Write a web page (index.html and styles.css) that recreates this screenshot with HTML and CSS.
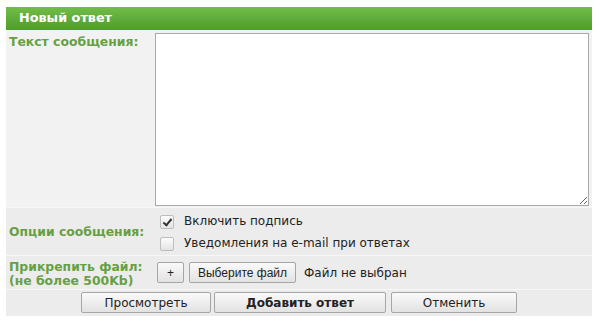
FILE: index.html
```html
<!DOCTYPE html>
<html lang="ru">
<head>
    <meta charset="UTF-8">
    <title>Новый ответ</title>
    <link rel="stylesheet" href="styles.css">
</head>
<body>
    <div class="reply-box">
        <div class="reply-head">Новый ответ</div>

        <div class="row row-text">
            <div class="label">Текст сообщения:</div>
            <div class="field">
                <textarea class="message"></textarea>
            </div>
        </div>

        <div class="row row-options">
            <div class="label">Опции сообщения:</div>
            <div class="field options">
                <label class="option"><span class="check checked"></span>Включить подпись</label>
                <label class="option"><span class="check"></span>Уведомления на e-mail при ответах</label>
            </div>
        </div>

        <div class="row row-file">
            <div class="label">Прикрепить файл:<br>(не более 500Kb)</div>
            <div class="field file">
                <button class="btn small">+</button>
                <button class="btn pick">Выберите файл</button>
                <span class="file-name">Файл не выбран</span>
            </div>
        </div>

        <div class="actions">
            <button class="btn wide">Просмотреть</button>
            <button class="btn wide main">Добавить ответ</button>
            <button class="btn wide">Отменить</button>
        </div>
    </div>
</body>
</html>
```

FILE: styles.css
```css
body {
    margin: 0;
    padding: 7px 8px 0 6px;
    background-color: #fff;
    font-family: "DejaVu Sans", Verdana, sans-serif;
}
.reply-box {
    width: 586px;
    background-color: #ececec;
}
.reply-head {
    height: 23px;
    line-height: 22px;
    padding-left: 13px;
    color: #fff;
    font-size: 12.8px;
    font-weight: bold;
    background: linear-gradient(#72bd48, #4f9c2c);
}
.row {
    display: grid;
    grid-template-columns: 144px 1fr;
    border-bottom: 1px solid #f7f7f7;
}
.label {
    padding: 5px 3px;
    color: #66a043;
    font-size: 12.4px;
    font-weight: bold;
    line-height: 14px;
}
.row-text {
    background-color: #f2f2f2;
}
.row-text .field {
    padding: 3px 3px 1px 5px;
}
.message {
    display: block;
    box-sizing: border-box;
    width: 434px;
    height: 173px;
    margin: 0;
    border: 1px solid #a9a9a9;
    background-color: #fff;
    resize: both;
}
.row-options .label {
    align-self: center;
}
.options {
    display: flex;
    flex-direction: column;
    gap: 7px;
    padding: 6px 0 4px 10px;
}
.option {
    display: flex;
    align-items: center;
    gap: 10px;
    font-size: 12px;
    color: #222;
    line-height: 15px;
}
.check {
    width: 12px;
    height: 12px;
    border: 1px solid #bdbdbd;
    border-radius: 2px;
    background: linear-gradient(#fcfcfc, #e4e4e4);
    position: relative;
}
.check.checked::after {
    content: "";
    position: absolute;
    left: 4px;
    top: 1px;
    width: 3px;
    height: 7px;
    border: solid #333;
    border-width: 0 2px 2px 0;
    transform: rotate(40deg);
}
.row-file .label {
    padding-top: 4px;
    padding-bottom: 1px;
}
.file {
    display: flex;
    align-items: center;
    gap: 5px;
    padding-left: 7px;
}
.btn {
    height: 21px;
    padding: 0 6px;
    border: 1px solid #a6a6a6;
    border-radius: 2px;
    background: linear-gradient(#fafafa, #e2e2e2);
    color: #222;
    font-family: "Liberation Sans", Arial, sans-serif;
    font-size: 12px;
}
.btn.small {
    width: 27px;
}
.btn.pick {
    width: 107px;
}
.file-name {
    margin-left: 3px;
    font-size: 12px;
    color: #222;
}
.actions {
    display: flex;
    justify-content: center;
    gap: 3px;
    padding: 2px 0 3px;
}
.btn.wide {
    width: 130px;
    font-family: "DejaVu Sans", Verdana, sans-serif;
}
.btn.main {
    width: 172px;
    font-weight: bold;
    margin-right: 2px;
}
.btn.wide:last-child {
    width: 126px;
}
```
